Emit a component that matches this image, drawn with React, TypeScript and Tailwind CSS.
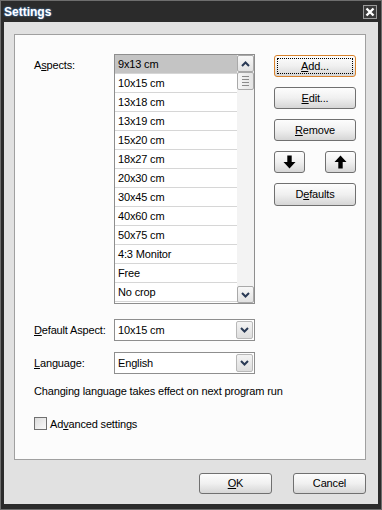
import React from 'react';

const font = "font-['Liberation_Sans',Arial,sans-serif] tracking-[-0.16px]";

const aspects = [
  '9x13 cm',
  '10x15 cm',
  '13x18 cm',
  '13x19 cm',
  '15x20 cm',
  '18x27 cm',
  '20x30 cm',
  '30x45 cm',
  '40x60 cm',
  '50x75 cm',
  '4:3 Monitor',
  'Free',
  'No crop',
];

const Chevron = ({ up = false }: { up?: boolean }) => (
  <svg width="9" height="6" viewBox="0 0 9 6" className={up ? '' : 'rotate-180'}>
    <path d="M1 5 L4.5 1.5 L8 5" fill="none" stroke="#2a3a55" strokeWidth="2" />
  </svg>
);

const Arrow = ({ up = false }: { up?: boolean }) => (
  <svg width="13" height="14" viewBox="0 0 13 14" className={up ? '' : 'rotate-180'}>
    <path d="M6.5 0.5 L12.5 7 L8.7 7 L8.7 13.5 L4.3 13.5 L4.3 7 L0.5 7 Z" fill="#000" />
  </svg>
);

const Btn = ({
  children,
  className = '',
  focused = false,
}: {
  children: React.ReactNode;
  className?: string;
  focused?: boolean;
}) => (
  <div
    className={`flex items-center justify-center rounded-[3px] border bg-linear-to-b from-[#fdfdfd] via-[#f0f0f0] to-[#d6d6d6] text-[11px] text-black ${
      focused ? 'border-[#d9822b] p-[2px]' : 'border-[#707070]'
    } ${className}`}
  >
    {focused ? (
      <div className="flex h-full w-full items-center justify-center border border-dotted border-black">
        {children}
      </div>
    ) : (
      children
    )}
  </div>
);

const Combo = ({ value }: { value: string }) => (
  <div className="flex h-[22px] w-[141px] border border-[#8e8e8e] bg-white">
    <div className="flex flex-1 items-center pl-[3px] text-[11px]">{value}</div>
    <div className="m-[1px] flex w-[17px] items-center justify-center rounded-[2px] border border-[#b8b8b8] bg-linear-to-b from-[#f4f4f4] to-[#dedede]">
      <Chevron />
    </div>
  </div>
);

const ScrollBtn = ({ up = false }: { up?: boolean }) => (
  <div className="flex h-[17px] w-[17px] items-center justify-center rounded-[2px] border border-[#a9a9a9] bg-linear-to-b from-[#f8f8f8] to-[#e2e2e2]">
    <Chevron up={up} />
  </div>
);

export default function App() {
  return (
    <div className={`flex h-[510px] w-[382px] flex-col border border-[#6e6e6e] bg-[#2b2b2b] text-black ${font}`}>
      <div className="flex h-[21px] items-center justify-between pl-[3px] pr-[4px]">
        <span className="text-[12px] font-bold tracking-normal text-white [text-shadow:0_0_2px_#5aa8ff]">Settings</span>
        <div className="flex h-[14px] w-[14px] items-center justify-center border border-[#9a9a9a] bg-[#3a3a3a]">
          <svg width="10" height="10" viewBox="0 0 10 10">
            <path d="M1.5 1.5 L8.5 8.5 M8.5 1.5 L1.5 8.5" stroke="#fff" strokeWidth="2.4" />
          </svg>
        </div>
      </div>

      <div className="mx-[3px] mb-[5px] flex flex-1 flex-col bg-[#e1e1e1] pl-[10px] pt-[12px]">
        <div className="h-[426px] w-[352px] border border-[#a0a0a0] bg-[#fcfcfc] pl-[19px] pt-[19px]">
          <div className="flex items-start">
            <div className="w-[80px] pt-[3px] text-[11px]">
              A<span className="underline">s</span>pects:
            </div>
            <div className="flex h-[250px] w-[141px] border border-[#8e8e8e] bg-white">
              <div className="flex flex-1 flex-col">
                {aspects.map((a, i) => (
                  <div
                    key={a}
                    className={`flex h-[19px] items-center border-b border-[#d6d6d6] pl-[3px] text-[11px] ${
                      i === 0 ? 'bg-[#c4c4c4]' : ''
                    }`}
                  >
                    {a}
                  </div>
                ))}
              </div>
              <div className="flex w-[17px] flex-col bg-[#f3f3f3]">
                <ScrollBtn up />
                <div className="flex h-[18px] w-[17px] flex-col items-center justify-center gap-[2px] rounded-[2px] border border-[#a9a9a9] bg-linear-to-r from-[#f6f6f6] to-[#e4e4e4]">
                  <div className="h-px w-[7px] bg-[#8a8a8a]" />
                  <div className="h-px w-[7px] bg-[#8a8a8a]" />
                  <div className="h-px w-[7px] bg-[#8a8a8a]" />
                  <div className="h-px w-[7px] bg-[#8a8a8a]" />
                </div>
                <div className="flex-1" />
                <ScrollBtn />
              </div>
            </div>
            <div className="ml-[19px] mt-px flex w-[82px] flex-col gap-[10px]">
              <Btn focused className="h-[22px]">
                <span>
                  <span className="underline">A</span>dd...
                </span>
              </Btn>
              <Btn className="h-[22px]">
                <span>
                  <span className="underline">E</span>dit...
                </span>
              </Btn>
              <Btn className="h-[22px]">
                <span>
                  <span className="underline">R</span>emove
                </span>
              </Btn>
              <div className="flex justify-between">
                <Btn className="h-[22px] w-[31px]">
                  <Arrow />
                </Btn>
                <Btn className="h-[22px] w-[31px]">
                  <Arrow up />
                </Btn>
              </div>
              <Btn className="h-[23px]">
                <span>
                  D<span className="underline">e</span>faults
                </span>
              </Btn>
            </div>
          </div>

          <div className="mt-[15px] flex items-center">
            <div className="w-[80px] text-[11px]">
              <span className="underline">D</span>efault Aspect:
            </div>
            <Combo value="10x15 cm" />
          </div>

          <div className="mt-[11px] flex items-center">
            <div className="w-[80px] text-[11px]">
              <span className="underline">L</span>anguage:
            </div>
            <Combo value="English" />
          </div>

          <div className="mt-[9px] text-[11px]">Changing language takes effect on next program run</div>

          <div className="mt-[16px] flex items-center gap-[3px]">
            <div className="h-[13px] w-[13px] border border-[#707070] bg-linear-to-br from-[#dcdcdc] to-[#fafafa]" />
            <span className="text-[11px]">
              Ad<span className="underline">v</span>anced settings
            </span>
          </div>
        </div>

        <div className="mt-[13px] flex w-[352px] justify-end gap-[21px]">
          <Btn className="h-[21px] w-[73px]">
            <span>
              <span className="underline">O</span>K
            </span>
          </Btn>
          <Btn className="h-[21px] w-[73px]">Cancel</Btn>
        </div>
      </div>
    </div>
  );
}
